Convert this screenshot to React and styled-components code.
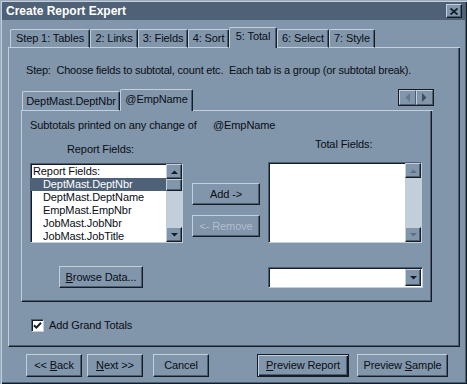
import React from 'react';
import styled, { createGlobalStyle, css } from 'styled-components';

const face = '#8195ab';
const light = '#c3d0dc';
const shadow = '#4d5e73';
const dark = '#141c26';
const caption = '#4f6177';
const track = '#c2ced9';
const greyed = '#b1bfcd';

const raised = css`
  border: 1px solid;
  border-color: ${light} ${dark} ${dark} ${light};
  box-shadow: inset -1px -1px ${shadow};
`;

const sunken = css`
  border: 1px solid;
  border-color: ${shadow} ${light} ${light} ${shadow};
  box-shadow: inset 1px 1px ${dark};
`;

const GlobalStyle = createGlobalStyle`
  *, *::before, *::after { box-sizing: border-box; }
  body { margin: 0; background: ${face}; }
`;

const Window = styled.div`
  width: 467px;
  height: 384px;
  padding: 2px;
  background: ${face};
  box-shadow: inset 1px 1px #9aabbd, inset 2px 2px ${light},
    inset -1px -1px ${dark}, inset -2px -2px ${shadow};
  font-family: 'Liberation Sans', Arial, sans-serif;
  font-size: 11px;
  line-height: 13px;
  letter-spacing: -0.1px;
  color: #0a0e14;
  display: flex;
  flex-direction: column;
  overflow: hidden;
`;

const TitleBar = styled.div`
  height: 18px;
  flex-shrink: 0;
  background: ${caption};
  display: flex;
  align-items: center;
  justify-content: space-between;
  padding: 0 3px 0 4px;
  color: #fff;
  font-size: 12px;
  font-weight: bold;
  letter-spacing: 0;
`;

const CloseButton = styled.div`
  width: 16px;
  height: 14px;
  ${raised};
  background: ${face};
  display: flex;
  align-items: center;
  justify-content: center;
`;

const TabStrip = styled.div`
  display: flex;
  align-items: flex-end;
  flex-shrink: 0;
  width: ${(p) => p.$w}px;
  height: ${(p) => p.$h}px;
  margin: ${(p) => p.$m};
`;

const TabGap = styled.div`
  width: ${(p) => p.$w}px;
  height: 1px;
  background: ${light};
`;

const TabFiller = styled.div`
  flex: 1;
  align-self: stretch;
  border-bottom: 1px solid ${light};
  display: flex;
  justify-content: flex-end;
  align-items: flex-start;
`;

const Tab = styled.div`
  width: ${(p) => p.$w}px;
  height: ${(p) => (p.$active ? p.$h + 2 : p.$h)}px;
  border: 1px solid;
  border-color: ${light} ${dark} ${light} ${light};
  border-bottom-style: ${(p) => (p.$active ? 'none' : 'solid')};
  border-radius: 2px 2px 0 0;
  box-shadow: inset -1px 0 ${shadow};
  padding-bottom: ${(p) => (p.$active ? 3 : 0)}px;
  display: flex;
  align-items: center;
  justify-content: center;
  white-space: nowrap;
`;

const Panel = styled.div`
  width: ${(p) => p.$w}px;
  height: ${(p) => p.$h}px;
  margin-left: ${(p) => p.$ml || 0}px;
  flex-shrink: 0;
  border: 1px solid;
  border-top: none;
  border-color: ${light} ${dark} ${dark} ${light};
  box-shadow: inset -1px -1px ${shadow};
  padding: ${(p) => p.$pad};
  display: flex;
  flex-direction: column;
`;

const StepText = styled.div`
  margin-left: 5px;
  white-space: pre;
  letter-spacing: -0.2px;
`;

const ScrollPair = styled.div`
  display: flex;
  border: 1px solid ${dark};
  margin-right: -1px;
`;

const PairButton = styled.div`
  width: 17px;
  height: 15px;
  border: 1px solid;
  border-color: ${light} ${shadow} ${shadow} ${light};
  background: ${face};
  display: flex;
  align-items: center;
  justify-content: center;
`;

const Caption = styled.div`
  display: flex;
  white-space: nowrap;
`;

const CaptionLabel = styled.span`
  width: ${(p) => p.$w}px;
`;

const Columns = styled.div`
  display: grid;
  grid-template-columns: 153px 85px 155px;
  row-gap: 23px;
  margin-top: 4px;
`;

const Column = styled.div`
  display: flex;
  flex-direction: column;
  padding-left: ${(p) => p.$pl || 0}px;
`;

const FieldLabel = styled.div`
  margin-top: ${(p) => p.$mt}px;
  padding-left: ${(p) => p.$pl}px;
  white-space: nowrap;
`;

const ListBox = styled.div`
  width: ${(p) => p.$w}px;
  height: ${(p) => p.$h}px;
  margin-top: ${(p) => p.$mt}px;
  ${sunken};
  background: #fff;
  display: flex;
  overflow: hidden;
`;

const ListItems = styled.div`
  flex: 1;
  padding-top: 1px;
`;

const ListItem = styled.div`
  height: 13px;
  padding-left: ${(p) => (p.$indent ? 12 : 2)}px;
  background: ${(p) => (p.$selected ? caption : 'transparent')};
  color: ${(p) => (p.$selected ? '#fff' : 'inherit')};
  white-space: nowrap;
`;

const ScrollBar = styled.div`
  width: 16px;
  background: ${track};
  display: flex;
  flex-direction: column;
`;

const ScrollButton = styled.div`
  height: ${(p) => p.$h || 15}px;
  flex-shrink: 0;
  ${raised};
  background: ${face};
  display: flex;
  align-items: center;
  justify-content: center;
`;

const ScrollTrack = styled.div`
  flex: 1;
`;

const Button = styled.div`
  width: ${(p) => p.$w}px;
  height: ${(p) => p.$h || 23}px;
  margin-left: ${(p) => p.$ml || 0}px;
  margin-top: ${(p) => p.$mt || 0}px;
  flex-shrink: 0;
  ${raised};
  background: ${face};
  color: ${(p) => (p.$disabled ? greyed : 'inherit')};
  display: flex;
  align-items: center;
  justify-content: center;
  white-space: pre;
  ${(p) =>
    p.$default &&
    css`
      border: 1px solid ${dark};
      box-shadow: inset 1px 1px ${light}, inset -1px -1px ${dark},
        inset -2px -2px ${shadow};
    `}
`;

const Key = styled.span`
  text-decoration: underline;
`;

const Combo = styled.div`
  width: 155px;
  height: 21px;
  margin-top: 1px;
  ${sunken};
  background: #fff;
  padding: 1px;
  display: flex;
  justify-content: flex-end;
`;

const DropButton = styled.div`
  width: 16px;
  ${raised};
  background: ${face};
  display: flex;
  align-items: center;
  justify-content: center;
`;

const CheckRow = styled.div`
  display: flex;
  align-items: center;
  gap: 5px;
  margin: 17px 0 0 10px;
`;

const CheckBox = styled.div`
  width: 13px;
  height: 13px;
  ${sunken};
  background: #fff;
  display: flex;
  align-items: center;
  justify-content: center;
`;

const Footer = styled.div`
  display: flex;
  margin: 7px 0 0 24px;
`;

// small solid triangle; s = depth of the point in px
const Tri = ({ dir, color = dark, s = 4 }) => {
  const horiz = dir === 'left' || dir === 'right';
  const b = s * 2 - 1;
  const pts = {
    up: `0,${s} ${b},${s} ${b / 2},0.5`,
    down: `0,0 ${b},0 ${b / 2},${s - 0.5}`,
    left: `${s},0 ${s},${b} 0.5,${b / 2}`,
    right: `0,0 0,${b} ${s - 0.5},${b / 2}`,
  }[dir];
  return (
    <svg width={horiz ? s : b} height={horiz ? b : s}>
      <polygon points={pts} fill={color} />
    </svg>
  );
};

const mainTabs = [
  ['Step 1: Tables', 80],
  ['2: Links', 48],
  ['3: Fields', 50],
  ['4: Sort', 41],
  ['5: Total', 48, true],
  ['6: Select', 52],
  ['7: Style', 46],
];

const reportFields = [
  'DeptMast.DeptNbr',
  'DeptMast.DeptName',
  'EmpMast.EmpNbr',
  'JobMast.JobNbr',
  'JobMast.JobTitle',
];

const App = () => (
  <>
    <GlobalStyle />
    <Window>
      <TitleBar>
        Create Report Expert
        <CloseButton>
          <svg width="8" height="7">
            <path d="M0.5 0.5 L7.5 6.5 M7.5 0.5 L0.5 6.5" stroke={dark} strokeWidth="1.8" />
          </svg>
        </CloseButton>
      </TitleBar>

      <TabStrip $w={452} $h={21} $m="7px 0 0 6px">
        <TabGap $w={2} />
        {mainTabs.map(([label, w, active]) => (
          <Tab key={label} $w={w} $h={19} $active={active}>
            {label}
          </Tab>
        ))}
        <TabFiller />
      </TabStrip>

      <Panel $w={452} $h={299} $ml={6} $pad="16px 0 0 12px">
        <StepText>
          Step:  Choose fields to subtotal, count etc.  Each tab is a group (or subtotal break).
        </StepText>

        <TabStrip $w={412} $h={22} $m="12px 0 0 0">
          <TabGap $w={1} />
          <Tab $w={98} $h={20}>DeptMast.DeptNbr</Tab>
          <Tab $w={73} $h={20} $active>@EmpName</Tab>
          <TabFiller>
            <ScrollPair>
              <PairButton>
                <Tri dir="left" color="#66778b" s={5} />
              </PairButton>
              <PairButton>
                <Tri dir="right" color="#3f4e61" s={5} />
              </PairButton>
            </ScrollPair>
          </TabFiller>
        </TabStrip>

        <Panel $w={411} $h={191} $pad="8px 0 0 8px">
          <Caption>
            <CaptionLabel $w={183}>Subtotals printed on any change of</CaptionLabel>
            <span>@EmpName</span>
          </Caption>

          <Columns>
            <Column>
              <FieldLabel $mt={7} $pl={37}>Report Fields:</FieldLabel>
              <ListBox $w={153} $h={80} $mt={7}>
                <ListItems>
                  <ListItem>Report Fields:</ListItem>
                  {reportFields.map((f, i) => (
                    <ListItem key={f} $indent $selected={i === 0}>
                      {f}
                    </ListItem>
                  ))}
                </ListItems>
                <ScrollBar>
                  <ScrollButton>
                    <Tri dir="up" />
                  </ScrollButton>
                  <ScrollButton $h={12} />
                  <ScrollTrack />
                  <ScrollButton>
                    <Tri dir="down" />
                  </ScrollButton>
                </ScrollBar>
              </ListBox>
            </Column>

            <Column $pl={9}>
              <Button $w={68} $h={22} $mt={47}>Add -&gt;</Button>
              <Button $w={68} $h={22} $mt={10} $disabled>&lt;- Remove</Button>
            </Column>

            <Column>
              <FieldLabel $mt={2} $pl={47}>Total Fields:</FieldLabel>
              <ListBox $w={154} $h={81} $mt={11}>
                <ListItems />
                <ScrollBar>
                  <ScrollButton>
                    <Tri dir="up" color="#5f7085" />
                  </ScrollButton>
                  <ScrollTrack />
                  <ScrollButton>
                    <Tri dir="down" color="#5f7085" />
                  </ScrollButton>
                </ScrollBar>
              </ListBox>
            </Column>

            <Column>
              <Button $w={84} $h={22} $ml={29}>
                <span>
                  <Key>B</Key>rowse Data...
                </span>
              </Button>
            </Column>
            <Column />
            <Column>
              <Combo>
                <DropButton>
                  <Tri dir="down" />
                </DropButton>
              </Combo>
            </Column>
          </Columns>
        </Panel>

        <CheckRow>
          <CheckBox>
            <svg width="9" height="9">
              <path d="M1 4.2 L3.4 6.6 L8 1.8" stroke={dark} strokeWidth="2" fill="none" />
            </svg>
          </CheckBox>
          Add Grand Totals
        </CheckRow>
      </Panel>

      <Footer>
        <Button $w={56}>
          <span>
            &lt;&lt; <Key>B</Key>ack
          </span>
        </Button>
        <Button $w={56} $ml={5}>
          <span>
            <Key>N</Key>ext &gt;&gt;
          </span>
        </Button>
        <Button $w={56} $ml={10}>Cancel</Button>
        <Button $w={92} $ml={48} $default>
          <span>
            <Key>P</Key>review Report
          </span>
        </Button>
        <Button $w={91} $ml={8}>
          <span>
            Preview <Key>S</Key>ample
          </span>
        </Button>
      </Footer>
    </Window>
  </>
);

export default App;
